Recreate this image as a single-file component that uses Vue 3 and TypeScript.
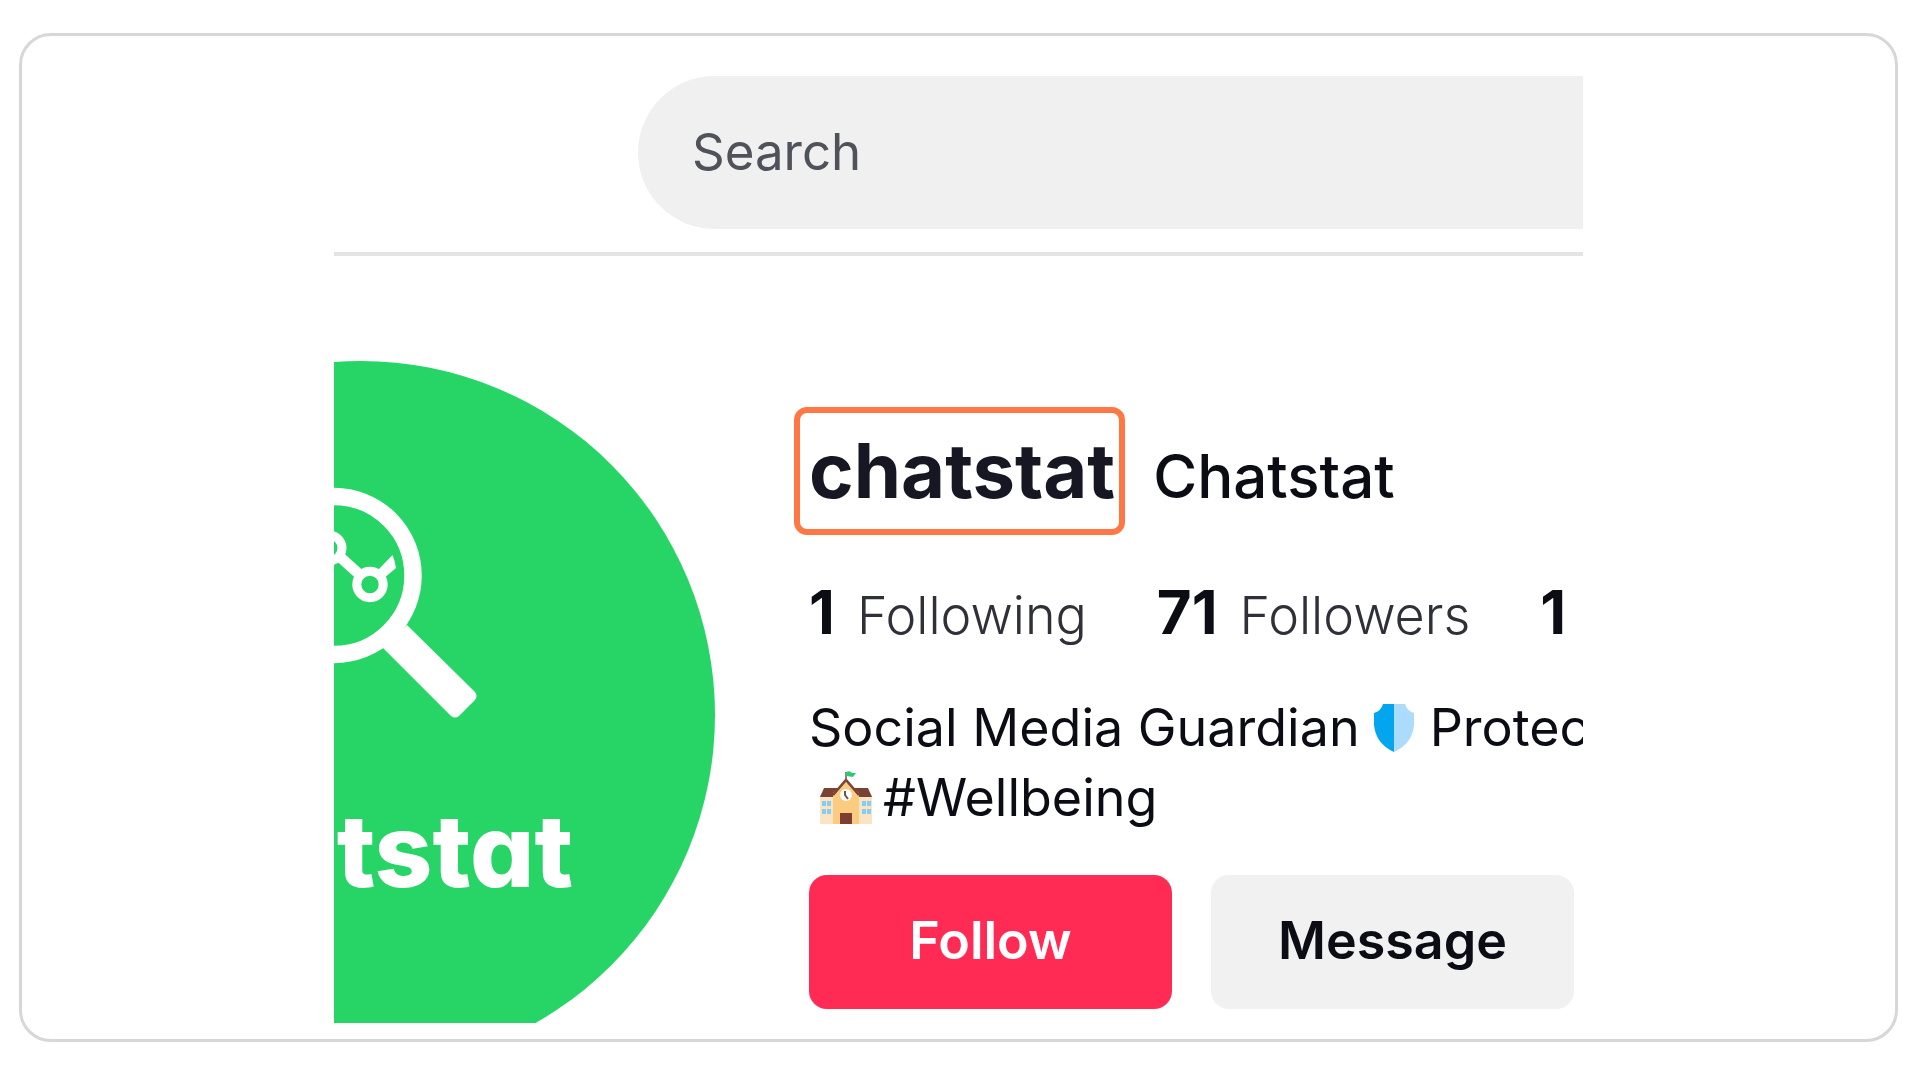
<script setup lang="ts">
interface Stat {
  count: string
  label: string
}

const stats: Stat[] = [
  { count: '1', label: 'Following' },
  { count: '71', label: 'Followers' },
  { count: '1', label: '' },
]
</script>

<template>
  <main class="card">
    <div class="screen">
      <header class="topbar">
        <input class="search" type="search" placeholder="Search" aria-label="Search" />
      </header>

      <section class="profile">
        <svg class="avatar" viewBox="0 0 381 662" role="img" aria-label="Chatstat logo">
          <circle cx="27" cy="354" r="354" fill="#27d567" />
          <circle cx="0" cy="214.500" r="79" fill="none" stroke="#fff" stroke-width="17.500" />
          <path d="M73 264 L141 331 Q144 335 141 339 L125 355 Q121 358 117 355 L49 287 Z" fill="#fff" />
          <g fill="none" stroke="#fff">
            <circle cx="-5" cy="187" r="13" stroke-width="9" />
            <circle cx="36" cy="223.500" r="13.200" stroke-width="9" />
            <path d="M5 195 L26 214" stroke-width="10.500" />
          </g>
          <path d="M43 210 L58.500 194 Q61 200 62 207 L49 218 Z" fill="#fff" />
          <text class="wordmark" x="239" y="526" text-anchor="end">tstat</text>
        </svg>

        <div class="info">
          <div class="names">
            <h1 class="username">chatstat</h1>
            <h2 class="nickname">Chatstat</h2>
          </div>

          <ul class="stats">
            <li v-for="(stat, i) in stats" :key="i" class="stat">
              <strong>{{ stat.count }}</strong>
              <span v-if="stat.label">{{ stat.label }}</span>
            </li>
          </ul>

          <div class="bio">
            <p class="line">
              <span>Social Media Guardian</span>
              <svg class="shield" viewBox="0 0 42 50" aria-hidden="true">
                <path d="M21 1 H10 Q8 8 1 10 V22 Q3 41 21 49 Z" fill="#03a5ef" />
                <path d="M21 1 H32 Q34 8 41 10 V22 Q39 41 21 49 Z" fill="#abdcfd" />
              </svg>
              <span>Protec</span>
            </p>
            <p class="line">
              <svg class="school" viewBox="0 0 54 54" aria-hidden="true">
                <rect x="1" y="24" width="52" height="29" fill="#f9e4c4" />
                <path d="M5 17 H49 L53 26 H1 Z" fill="#7a4234" />
                <path d="M14 53 V22 L27 10 L40 22 V53 Z" fill="#fbcb7f" />
                <path d="M14 24 L27 9 L40 24" fill="none" stroke="#7a4234" stroke-width="2.500" />
                <path d="M27 10 V1" stroke="#6e5a52" stroke-width="1.500" />
                <path d="M27 1 Q31 -1 33 2 H37 L34 6 L27 5 Z" fill="#30c77b" />
                <circle cx="27" cy="24" r="6" fill="#fff" />
                <path d="M26 20 V24 L29 28" fill="none" stroke="#6b5347" stroke-width="2" />
                <rect x="21" y="42" width="12" height="11" fill="#7b4033" />
                <path
                  d="M3 30h4v5h-4zM8 30h4v5h-4zM3 38h4v5h-4zM8 38h4v5h-4zM43 30h4v5h-4zM48 30h4v5h-4zM43 38h4v5h-4zM48 38h4v5h-4z"
                  fill="#86cdf5"
                />
              </svg>
              <span>#Wellbeing</span>
            </p>
          </div>

          <div class="actions">
            <button class="action follow" type="button">Follow</button>
            <button class="action message" type="button">Message</button>
          </div>
        </div>
      </section>
    </div>
  </main>
</template>

<style>
body {
  margin: 0;
  background: #fff;
}
</style>

<style scoped>
.card {
  box-sizing: border-box;
  margin: 33px 24px 28px 19px;
  padding-bottom: 16px;
  border: 3px solid #d7d7d7;
  border-radius: 32px;
  font-family: Inter, "Liberation Sans", sans-serif;
  color: #0c0d14;
}

.screen {
  max-width: 1249px;
  margin: 0 auto;
  overflow: hidden;
}

.topbar {
  display: flex;
  padding: 40px 0 23px 304px;
  border-bottom: 4px solid #e4e4e5;
}

.search {
  flex: 1;
  min-width: 0;
  height: 153px;
  box-sizing: border-box;
  padding: 0 0 2px 54px;
  border: 0;
  border-radius: 77px 0 0 77px;
  background: #f0f0f0;
  font: 400 51px/64px Inter, "Liberation Sans", sans-serif;
  appearance: none;
}

.search::placeholder {
  color: #50525a;
  opacity: 1;
}

.profile {
  display: flex;
  align-items: flex-start;
  gap: 94px;
  padding-top: 105px;
}

.avatar {
  flex: none;
  width: 381px;
  height: 662px;
  overflow: hidden;
}

.wordmark {
  font: 800 101px Inter, sans-serif;
  font-feature-settings: "cv11";
  fill: #fff;
}

.info {
  flex: 1;
  min-width: 0;
  padding-top: 46px;
  white-space: nowrap;
}

.names {
  display: flex;
  align-items: baseline;
  gap: 28px;
  margin-left: -15px;
}

.username {
  margin: 0;
  padding: 11px 4px 13px 9px;
  border: 6px solid #ff7744;
  border-radius: 13px;
  font-size: 76px;
  font-weight: 700;
  line-height: 92px;
  color: #161722;
}

.nickname {
  margin: 0;
  font-size: 60px;
  font-weight: 500;
  line-height: 70px;
}

.stats {
  display: flex;
  gap: 70px;
  margin: 42px 0 0;
  padding: 0;
  list-style: none;
}

.stat {
  display: flex;
  align-items: baseline;
  gap: 22px;
  font-size: 52px;
  font-weight: 300;
  line-height: 70px;
  color: #2f3038;
}

.stat strong {
  font-size: 60px;
  font-weight: 700;
  color: #0c0d14;
}

.bio {
  margin-top: 42px;
}

.line {
  display: flex;
  align-items: center;
  margin: 0;
  font-size: 52px;
  font-weight: 400;
  line-height: 70px;
}

.shield {
  flex: none;
  width: 42px;
  height: 50px;
  margin: 0 15px 0 13px;
}

.school {
  flex: none;
  width: 54px;
  height: 54px;
  margin: 0 10px;
}

.actions {
  display: flex;
  gap: 39px;
  margin-top: 42px;
}

.action {
  width: 363px;
  height: 134px;
  padding: 0 0 2px;
  border: 0;
  border-radius: 18px;
  font: 600 52px/64px Inter, "Liberation Sans", sans-serif;
}

.follow {
  background: #ff2b54;
  color: #fff;
}

.message {
  background: #f1f1f1;
  color: #0c0d14;
}
</style>
